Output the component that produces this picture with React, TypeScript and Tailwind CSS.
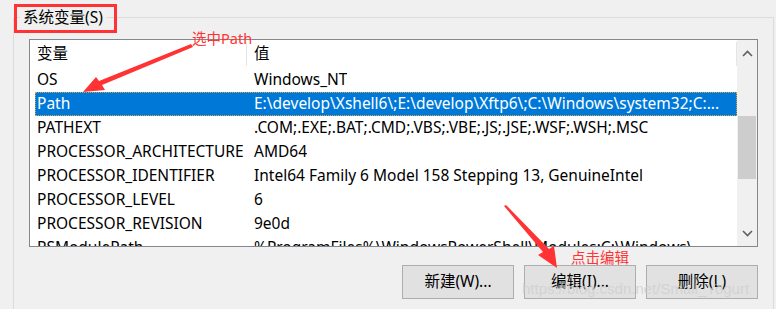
const rows: [string, string][] = [
  ["OS", "Windows_NT"],
  ["Path", "E:\\develop\\Xshell6\\;E:\\develop\\Xftp6\\;C:\\Windows\\system32;C:..."],
  ["PATHEXT", ".COM;.EXE;.BAT;.CMD;.VBS;.VBE;.JS;.JSE;.WSF;.WSH;.MSC"],
  ["PROCESSOR_ARCHITECTURE", "AMD64"],
  ["PROCESSOR_IDENTIFIER", "Intel64 Family 6 Model 158 Stepping 13, GenuineIntel"],
  ["PROCESSOR_LEVEL", "6"],
  ["PROCESSOR_REVISION", "9e0d"],
  ["PSModulePath", "%ProgramFiles%\\WindowsPowerShell\\Modules;C:\\Windows\\..."],
];

const font = "font-['Noto_Sans','Noto_Sans_CJK_SC',sans-serif]";

function ScrollBar() {
  return (
    <div className="w-[20px] bg-[#f0f0f0] flex flex-col items-stretch">
      <div className="h-[26px] flex items-center justify-center">
        <svg width="11" height="7" viewBox="0 0 11 7">
          <path d="M1 6 L5.5 1.5 L10 6" fill="none" stroke="#606060" strokeWidth="1.6" />
        </svg>
      </div>
      <div className="h-[50px]" />
      <div className="h-[63px] mx-[1px] bg-[#cdcdcd]" />
      <div className="flex-1" />
      <div className="h-[26px] flex items-center justify-center">
        <svg width="11" height="7" viewBox="0 0 11 7">
          <path d="M1 1 L5.5 5.5 L10 1" fill="none" stroke="#606060" strokeWidth="1.6" />
        </svg>
      </div>
    </div>
  );
}

export default function App() {
  return (
    <div className={`relative w-[776px] h-[309px] overflow-hidden bg-[#f0f0f0] text-black ${font}`}>
      <div className="pt-[17px] pl-[13px]">
        <div className="w-[761px] h-[300px] border-l border-t border-r border-[#dcdcdc]">
          <div className="-mt-[11px] ml-[6px] w-fit px-[3px] bg-[#f0f0f0] text-[15.5px] leading-[20px]">
            系统变量(S)
          </div>

          {/* list view */}
          <div className="ml-[15px] mt-[12px] w-[729px] h-[208px] border border-[#828790] bg-white flex">
            <div className="flex-1 overflow-hidden text-[15.5px]">
              <div className="h-[28px] flex items-center">
                <div className="w-[217px] pl-[7px] border-r border-[#e5e5e5] h-[24px] flex items-center">变量</div>
                <div className="flex-1 pl-[7px] border-r border-[#e5e5e5] h-[24px] flex items-center">值</div>
              </div>
              {rows.map(([k, v]) => {
                const selected = k === "Path";
                return (
                  <div
                    key={k}
                    className={`ml-[5px] h-[24px] flex items-center whitespace-nowrap ${
                      selected ? "bg-[#0078d7] text-white outline-1 outline-dotted outline-[#d9a54a] -outline-offset-1" : ""
                    }`}
                  >
                    <div className="w-[212px] pl-[2px] shrink-0">{k}</div>
                    <div className="pl-[7px] overflow-hidden">{v}</div>
                  </div>
                );
              })}
            </div>
            <ScrollBar />
          </div>

          {/* buttons */}
          <div className="mt-[18px] mr-[15px] flex justify-end gap-[10px] text-[15.5px]">
            {["新建(W)...", "编辑(I)...", "删除(L)"].map((b) => (
              <button
                key={b}
                className="w-[112px] h-[34px] bg-[#e1e1e1] border border-[#adadad] flex items-center justify-center"
              >
                {b}
              </button>
            ))}
          </div>
        </div>
      </div>

      {/* annotations */}
      <div className="absolute left-[14px] top-[4px] w-[103px] h-[29px] border-[3px] border-[#f33]" />
      <div className="absolute left-[192px] top-[29px] text-[14.5px] leading-[18px] text-[#f33]">选中Path</div>
      <div className="absolute left-[571px] top-[248px] text-[14.5px] leading-[18px] text-[#f33]">点击编辑</div>
      <svg className="absolute left-0 top-0 pointer-events-none" width="776" height="309">
        <polygon points="191,44 193,47 102,85 105,90 83,92 96,77 99,81" fill="#f33" />
        <polygon points="504,206 506,205 549,249 554,246 557,268 538,255 543,252" fill="#f33" />
      </svg>
      <div className="absolute left-[522px] top-[279px] text-[15px] leading-[20px] text-[#cfcfcf]/80 font-['Liberation_Sans',sans-serif]">
        https://blog.csdn.net/Small_Yogurt
      </div>
    </div>
  );
}
